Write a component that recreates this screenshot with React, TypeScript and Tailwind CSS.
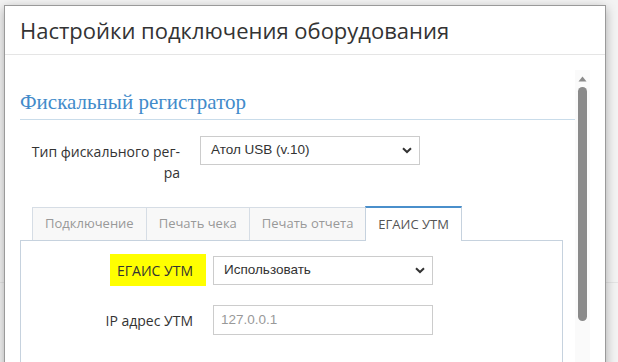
import React from 'react';

const Chevron = () => (
  <svg width="10" height="7" viewBox="0 0 10 7" className="shrink-0">
    <path d="M1 1.2 L5 5 L9 1.2" fill="none" stroke="#333" strokeWidth="2" />
  </svg>
);

const Select = ({ value, width }: { value: string; width: string }) => (
  <div
    className={`${width} flex h-[29px] items-center justify-between border border-[#ccc] bg-white pl-[10px] pr-[7px] text-[13.5px] text-[#333]`}
    style={{ fontFamily: '"Liberation Sans", Arial, sans-serif' }}
  >
    <span>{value}</span>
    <Chevron />
  </div>
);

const tabs = ['Подключение', 'Печать чека', 'Печать отчета'];

export default function App() {
  return (
    <div
      className="relative h-[362px] w-[618px] overflow-hidden bg-[#f3f3f3]"
      style={{ fontFamily: '"Open Sans", "Noto Sans", sans-serif' }}
    >
      {/* page behind the overlay */}
      <div className="h-[283px] border-b border-[#e4e4e4]" />

      {/* modal */}
      <div className="absolute left-[4px] top-[5px] h-[400px] w-[602px] border border-[#9a9a9a] bg-white shadow-[0_3px_10px_rgba(0,0,0,0.3)]">
        <div className="flex h-[49px] items-center border-b border-[#e5e5e5] pl-[15px] text-[22px] text-[#333]">
          Настройки подключения оборудования
        </div>

        <div className="flex">
          {/* scroll content */}
          <div className="w-[570px] pl-[15px]">
            <div
              className="mt-[35px] border-b border-[#c9dcea] pb-[5px] text-[21px] leading-[24px] text-[#428bca]"
              style={{ fontFamily: '"Liberation Serif", "Times New Roman", serif' }}
            >
              Фискальный регистратор
            </div>

            <div className="mt-[16px] flex">
              <div className="w-[160px] pt-[5px] text-right text-[14px] leading-[21px] text-[#333]">
                Тип фискального рег-ра
              </div>
              <div className="pl-[20px]">
                <Select value="Атол USB (v.10)" width="w-[220px]" />
              </div>
            </div>

            <div className="mr-[12px] mt-[23px]">
              <div className="flex items-end pl-[12px] text-[13px]">
                {tabs.map((t) => (
                  <div
                    key={t}
                    className="-mr-px flex h-[33px] items-center border border-b-0 border-[#d6dde5] bg-[#f8f8f8] px-[12px] text-[#999]"
                  >
                    {t}
                  </div>
                ))}
                <div className="relative z-10 -mb-px flex h-[35px] items-center border-x border-t-2 border-x-[#c6d2de] border-t-[#4a8fcb] bg-white px-[12px] text-[#555]">
                  ЕГАИС УТМ
                </div>
              </div>

              <div className="h-[140px] border border-[#c6d2de] pt-[13px]">
                <div className="flex items-center">
                  <div className="flex w-[192px] justify-end pr-[7px]">
                    <span className="flex h-[32px] items-center bg-[#ffff00] pl-[7px] pr-[13px] text-[14px] text-[#333]">
                      ЕГАИС УТМ
                    </span>
                  </div>
                  <Select value="Использовать" width="w-[220px]" />
                </div>
                <div className="mt-[19px] flex items-center">
                  <div className="w-[192px] pr-[20px] text-right text-[14px] text-[#333]">IP адрес УТМ</div>
                  <div
                    className="flex h-[30px] w-[220px] items-center border border-[#ccc] pl-[7px] text-[13.5px] text-[#999]"
                    style={{ fontFamily: '"Liberation Sans", Arial, sans-serif' }}
                  >
                    127.0.0.1
                  </div>
                </div>
              </div>
            </div>
          </div>

          {/* scrollbar */}
          <div className="mt-[15px] flex h-[300px] w-[15px] flex-col items-center bg-[#fafafa]">
            <svg width="9" height="6" viewBox="0 0 9 6" className="mt-[6px]">
              <path d="M0.5 5.5 L4.5 0.5 L8.5 5.5 Z" fill="#8a8a8a" />
            </svg>
            <div className="mt-[5px] h-[234px] w-[9px] rounded-full bg-[#8a8a8a]" />
          </div>
        </div>
      </div>
    </div>
  );
}
